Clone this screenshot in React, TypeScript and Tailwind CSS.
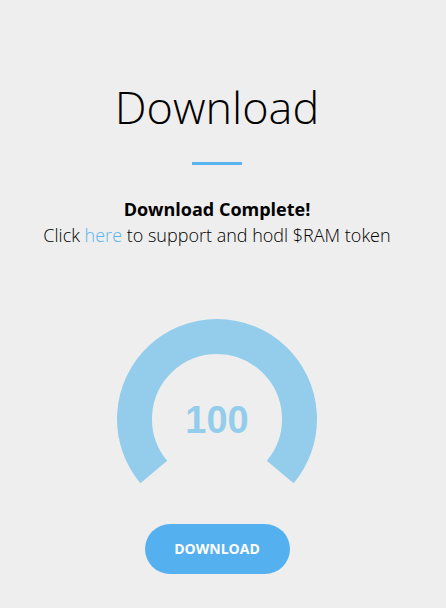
import React from "react";

function Gauge({ value }: { value: number }) {
    // arc from 220deg to -40deg, r 82.5, stroke 35
    return (
        <svg width="200" height="166" viewBox="0 0 200 166">
            <path
                d="M 36.8 153.03 A 82.5 82.5 0 1 1 163.2 153.03"
                fill="none"
                stroke="#93cdeb"
                strokeWidth="35"
            />
            <text
                x="100"
                y="113.5"
                textAnchor="middle"
                fontFamily="'Liberation Sans', Arial, sans-serif"
                fontWeight="700"
                fontSize="38"
                fill="#93cdeb"
            >
                {value}
            </text>
        </svg>
    );
}

export default function App() {
    return (
        <div className="min-h-[608px] w-full bg-[#eeeeee] pr-3" style={{ fontFamily: "'Open Sans', sans-serif" }}>
            <div className="flex flex-col items-center">
                <h1 className="mt-[73px] text-[45px] leading-[1.5] font-light text-black">Download</h1>
                <div className="mt-[21px] h-[3px] w-[50px] bg-[#5ab4f0]" />

                {/* status */}
                <p className="mt-[31px] text-[18px] leading-[26px] font-bold text-black">Download Complete!</p>
                <p className="text-[18px] leading-[26px] font-light text-black">
                    Click <a className="text-[#5ab4f0]">here</a> to support and hodl $RAM token
                </p>

                <div className="mt-[71px]">
                    <Gauge value={100} />
                </div>

                <button className="mt-[39px] h-[50px] w-[145px] rounded-full bg-[#55b0ef] text-[14px] font-bold text-white uppercase">
                    Download
                </button>
            </div>
        </div>
    );
}
